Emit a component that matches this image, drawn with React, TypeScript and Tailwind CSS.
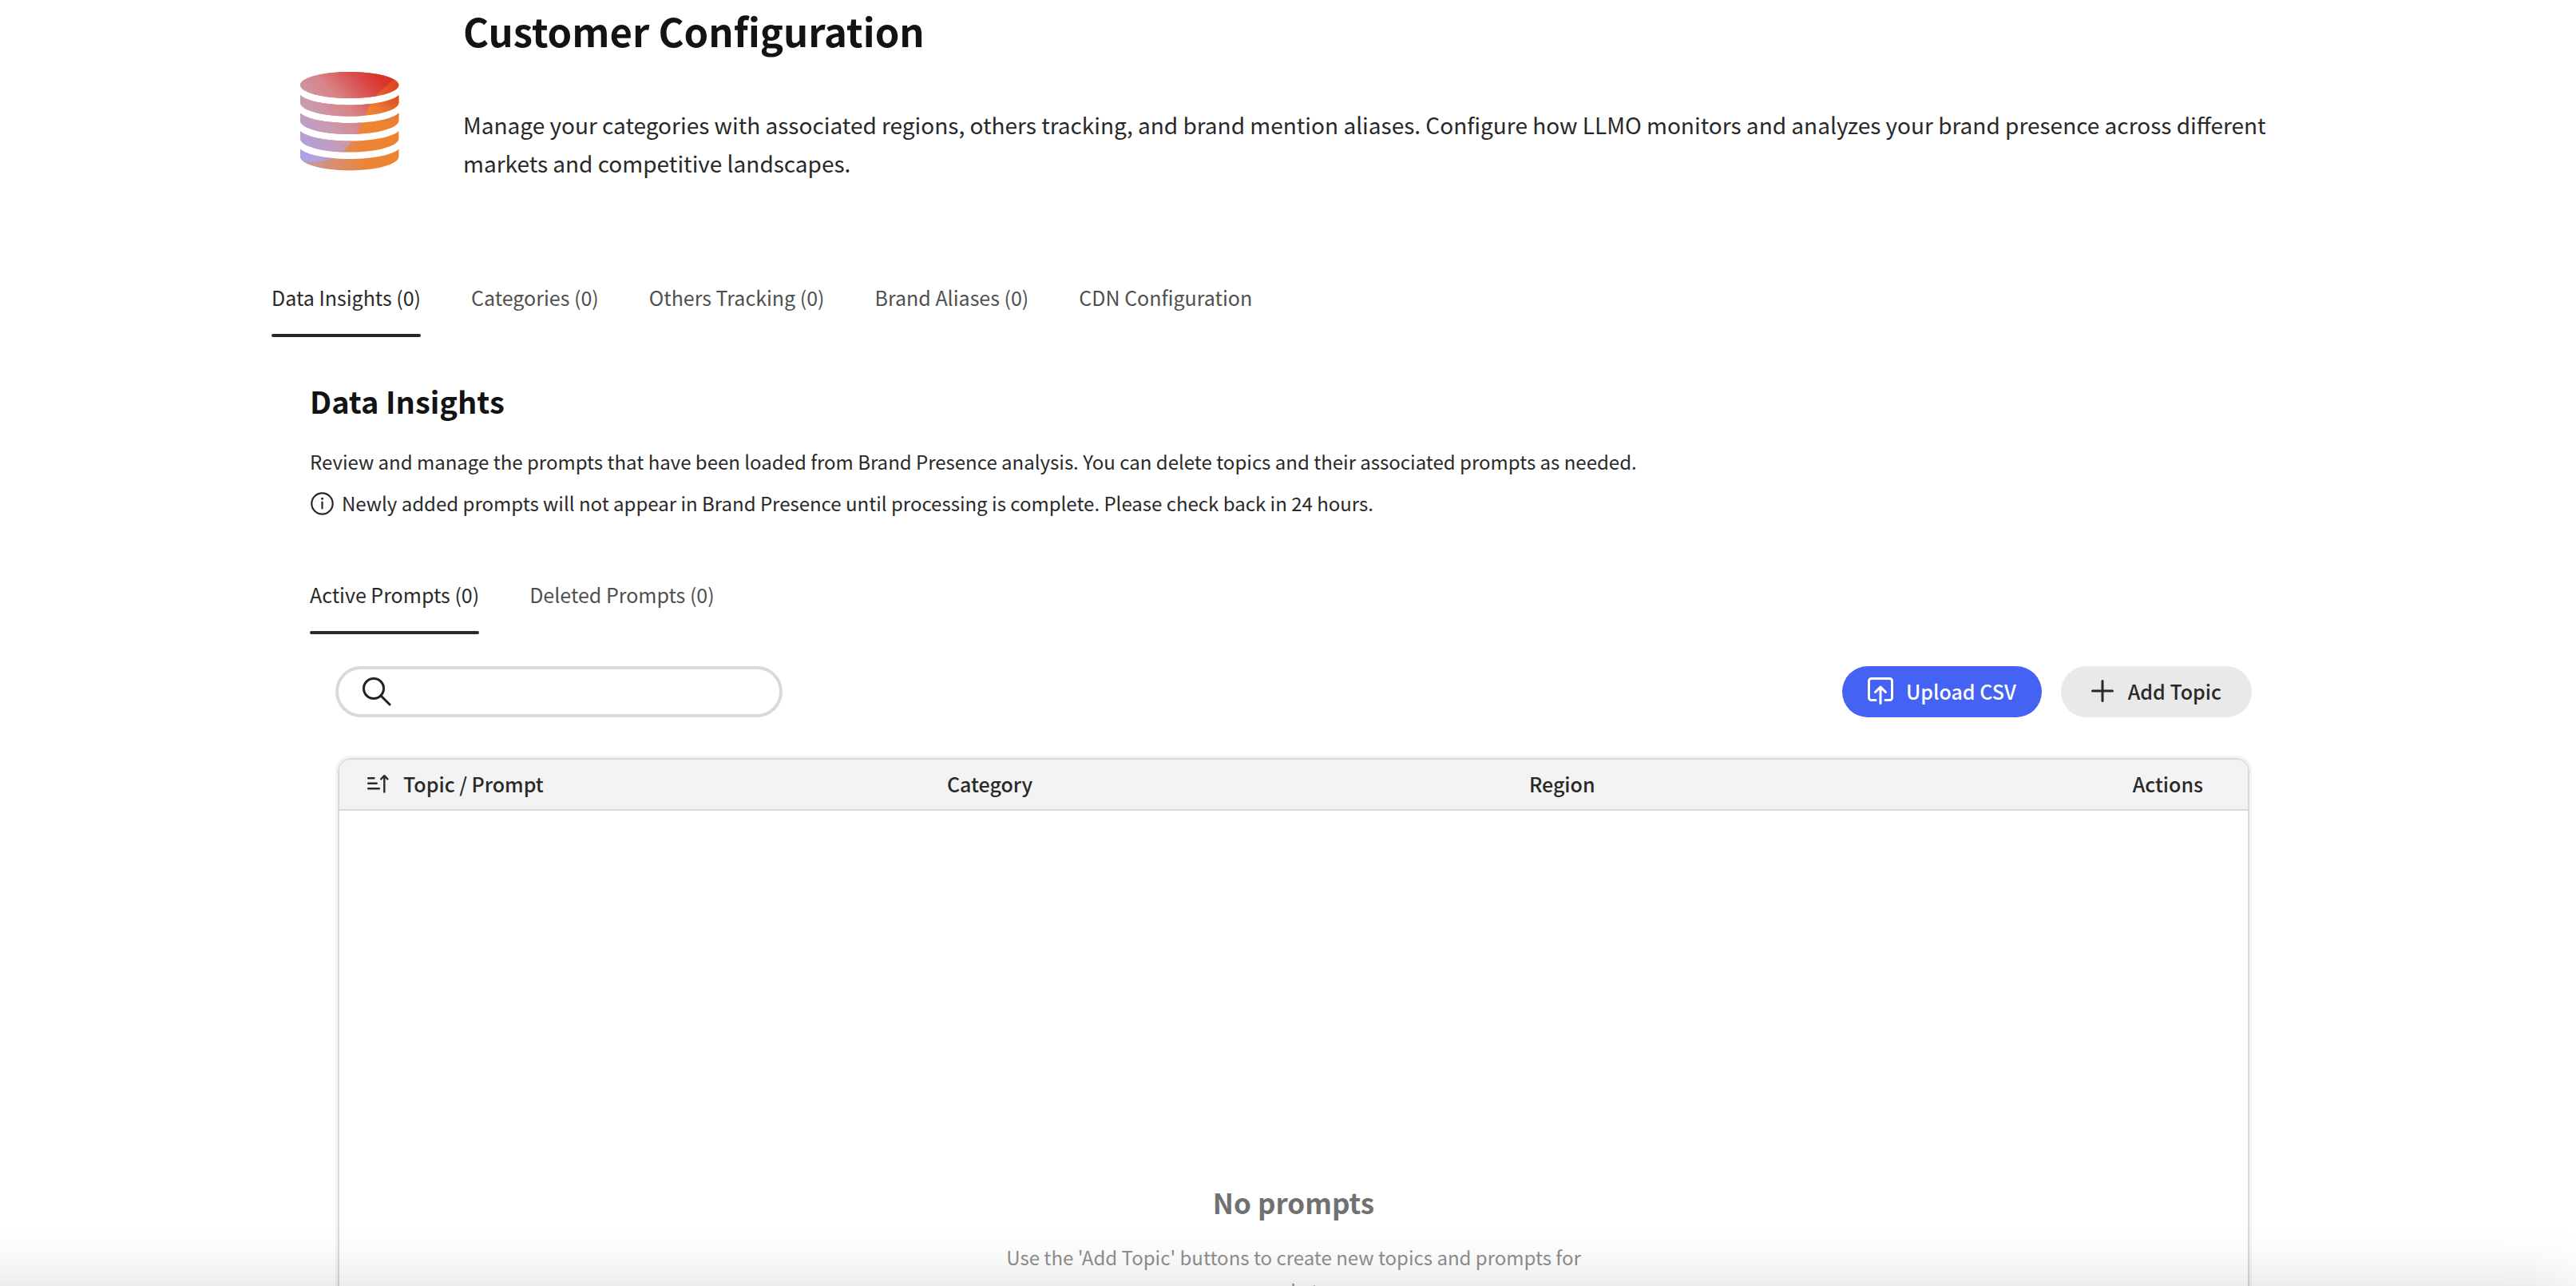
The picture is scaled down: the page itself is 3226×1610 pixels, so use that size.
import React from "react";

type TabItem = { id: string; label: string };

const mainTabs: TabItem[] = [
  { id: "insights", label: "Data Insights (0)" },
  { id: "categories", label: "Categories (0)" },
  { id: "others", label: "Others Tracking (0)" },
  { id: "aliases", label: "Brand Aliases (0)" },
  { id: "cdn", label: "CDN Configuration" },
];

const promptTabs: TabItem[] = [
  { id: "active", label: "Active Prompts (0)" },
  { id: "deleted", label: "Deleted Prompts (0)" },
];

function Tabs({ items, label }: { items: TabItem[]; label: string }) {
  return (
    <div role="tablist" aria-label={label} className="flex gap-[63px]">
      {items.map((item, i) => (
        <button
          key={item.id}
          type="button"
          role="tab"
          aria-selected={i === 0}
          className={
            i === 0
              ? "flex flex-col text-[#292929] after:mt-[27px] after:h-1 after:w-full after:rounded-sm after:bg-[#292929]"
              : "flex flex-col text-[#505050]"
          }
        >
          {item.label}
        </button>
      ))}
    </div>
  );
}

function DatabaseLogo() {
  return (
    <svg viewBox="0 0 124 124" className="h-31 w-31" aria-hidden="true">
      <defs>
        <clipPath id="discs">
          <path d="M0 16.500C0 7.400 27.600 0 61.700 0s61.700 7.400 61.700 16.500S95.800 33 61.700 33 0 25.600 0 16.500z" />
          <path d="M0 29C8 36.500 32 41.500 61.700 41.500s53.700-5 61.700-12.500v9.500C123.400 48 95.800 55.500 61.700 55.500S0 48 0 38.500z" />
          <path d="M0 51.600C8 59.100 32 64.100 61.700 64.100s53.700-5 61.700-12.500v9.500C123.400 70.600 95.800 78.100 61.700 78.100S0 70.600 0 61.100z" />
          <path d="M0 74.100C8 81.600 32 86.600 61.700 86.600s53.700-5 61.700-12.500v9.500C123.400 93.100 95.800 100.600 61.700 100.600S0 93.100 0 83.600z" />
          <path d="M0 96.600C8 104.100 32 109.100 61.700 109.100s53.700-5 61.700-12.500v9.500C123.400 115.600 95.800 123.500 61.700 123.500S0 115.600 0 106.100z" />
        </clipPath>
        <linearGradient id="warm" gradientUnits="userSpaceOnUse" x1="15" y1="118" x2="82" y2="100">
          <stop offset="0" stopColor="#c99699" />
          <stop offset="1" stopColor="#ec8433" />
        </linearGradient>
        <radialGradient id="ember" gradientUnits="userSpaceOnUse" cx="124" cy="18" r="56">
          <stop offset="0" stopColor="#dc3f22" />
          <stop offset="0.400" stopColor="#e25a28" />
          <stop offset="1" stopColor="#ec8433" stopOpacity="0" />
        </radialGradient>
        <linearGradient id="cool" gradientUnits="userSpaceOnUse" x1="0" y1="108" x2="104" y2="8">
          <stop offset="0" stopColor="#a8a2ee" />
          <stop offset="0.380" stopColor="#cb9aae" />
          <stop offset="0.620" stopColor="#d98083" />
          <stop offset="0.820" stopColor="#db4f4f" />
          <stop offset="1" stopColor="#d93226" />
        </linearGradient>
      </defs>
      <g clipPath="url(#discs)">
        <rect width="124" height="124" fill="url(#warm)" />
        <rect width="124" height="124" fill="url(#ember)" />
        <path d="M0 0H124V7C120 8 118 9 116 11 104 20 94 30 88 40 80 54 78 66 71 77 65 88 53 103 40 108 31 112 16 114 5 112L0 108z" fill="url(#cool)" />
      </g>
    </svg>
  );
}

function InfoIcon() {
  return (
    <svg viewBox="0 0 30 30" className="size-[30px]" fill="none" stroke="#292929" strokeWidth="2.200" aria-hidden="true">
      <circle cx="15.500" cy="15.500" r="13.200" />
      <path d="M15.500 13.500v8" strokeLinecap="round" />
      <circle cx="15.500" cy="9.200" r="1.500" fill="#292929" stroke="none" />
    </svg>
  );
}

function SearchIcon() {
  return (
    <svg viewBox="0 0 36 36" className="size-9 shrink-0" fill="none" stroke="#222222" strokeWidth="3" strokeLinecap="round" aria-hidden="true">
      <circle cx="14" cy="14" r="12.500" />
      <path d="M23 23L34 34" />
    </svg>
  );
}

function UploadIcon() {
  return (
    <svg viewBox="0 0 32 34" className="h-[34px] w-8" fill="none" stroke="currentColor" strokeWidth="3" strokeLinecap="round" strokeLinejoin="round" aria-hidden="true">
      <path d="M10 28.500H4.500a3 3 0 0 1-3-3V4.500a3 3 0 0 1 3-3h23a3 3 0 0 1 3 3v21a3 3 0 0 1-3 3H22" />
      <path d="M16 32.500V12.500M9.500 18.500L16 12l6.500 6.500" />
    </svg>
  );
}

function PlusIcon() {
  return (
    <svg viewBox="0 0 28 28" className="size-7" fill="none" stroke="currentColor" strokeWidth="3" strokeLinecap="round" aria-hidden="true">
      <path d="M14 1.500v25M1.500 14h25" />
    </svg>
  );
}

function SortIcon() {
  return (
    <svg viewBox="0 0 30 24" className="h-6 w-[30px]" fill="none" stroke="#292929" strokeWidth="2.400" strokeLinecap="round" strokeLinejoin="round" aria-hidden="true">
      <path d="M4.200 5.200h7.300M4.200 11.700h10.500M4.200 18.200h13.600" />
      <path d="M24.300 22.500V2.500M20.200 6.300L24.300 2.200 28.400 6.300" />
    </svg>
  );
}

export default function App() {
  return (
    <div className="relative h-screen overflow-hidden bg-white pr-[326px] pl-[340px] font-['Noto_Sans_CJK_SC','Noto_Sans',sans-serif] text-[25px] leading-[38px] text-[#292929]">
      <header className="flex gap-20 pl-9">
        <div className="mt-[90px]">
          <DatabaseLogo />
        </div>
        <div className="flex-1">
          <h1 className="mt-1.5 text-[49px] leading-[64px] font-bold text-[#131313]">Customer Configuration</h1>
          <p className="mt-[62px] text-[28px] leading-12">
            Manage your categories with associated regions, others tracking, and brand mention aliases. Configure how
            LLMO monitors and analyzes your brand presence across different markets and competitive landscapes.
          </p>
        </div>
      </header>

      <nav className="mt-[125px]">
        <Tabs items={mainTabs} label="Configuration sections" />
      </nav>

      <main className="mt-[54px] pl-12">
        <h2 className="text-[38px] leading-[52px] font-bold text-[#131313]">Data Insights</h2>
        <p className="mt-[30px] text-2xl leading-10">
          Review and manage the prompts that have been loaded from Brand Presence analysis. You can delete topics and
          their associated prompts as needed.
        </p>
        <p className="mt-3 flex items-center gap-2.5 text-2xl leading-10">
          <InfoIcon />
          Newly added prompts will not appear in Brand Presence until processing is complete. Please check back in 24
          hours.
        </p>

        <div className="mt-[75px]">
          <Tabs items={promptTabs} label="Prompt lists" />
        </div>

        <section className="mt-10 mr-12 px-8">
          <div className="flex items-center justify-between">
            <label className="flex h-16 w-[560px] items-center gap-3 rounded-full border-4 border-[#dadada] px-[30px]">
              <SearchIcon />
              <input type="search" aria-label="Search prompts" className="min-w-0 flex-1 bg-transparent outline-none" />
            </label>
            <div className="flex gap-6 font-medium">
              <button type="button" className="flex h-16 items-center gap-4 rounded-full bg-[#4462f3] px-8 pb-0.5 text-white">
                <UploadIcon />
                Upload CSV
              </button>
              <button type="button" className="flex h-16 items-center gap-[18px] rounded-full bg-[#e9e9e9] px-[38px] pb-0.5">
                <PlusIcon />
                Add Topic
              </button>
            </div>
          </div>

          <div className="mt-12 h-[900px] overflow-hidden rounded-[20px] border-[3px] border-[#f3f3f3]">
            <div className="h-full overflow-hidden rounded-[16px] border-2 border-[#d9d9d9]">
              <table className="w-full table-fixed text-left">
                <thead className="border-b-2 border-[#d9d9d9] bg-[#f3f3f3]">
                  <tr className="h-[63px]">
                    <th scope="col" className="w-[30.5%] pb-0.5 pl-8 font-medium">
                      <span className="flex items-center gap-[18px]">
                        <SortIcon />
                        Topic / Prompt
                      </span>
                    </th>
                    <th scope="col" className="w-[30.5%] pb-0.5 pl-8 font-medium">Category</th>
                    <th scope="col" className="pb-0.5 pl-8 font-medium">Region</th>
                    <th scope="col" className="w-[8%] pr-14 pb-0.5 text-right font-medium">Actions</th>
                  </tr>
                </thead>
              </table>
              <div className="mx-auto mt-[466px] w-[760px] text-center">
                <h3 className="text-[35px] leading-[48px] font-bold text-[#717171]">No prompts</h3>
                <p className="mt-6 text-2xl leading-[42px] text-[#8f8f8f]">
                  Use the 'Add Topic' buttons to create new topics and prompts for markets.
                </p>
              </div>
            </div>
          </div>
        </section>
      </main>

      <div className="pointer-events-none absolute top-full right-0 -left-40 h-40 shadow-[0_0_80px_rgba(0,0,0,0.15)]" />
    </div>
  );
}
